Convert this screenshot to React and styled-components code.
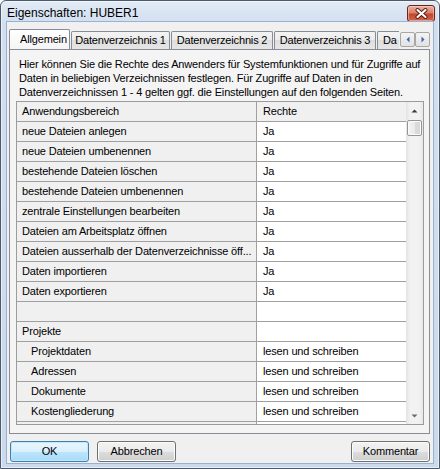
import React from "react";
import styled, { createGlobalStyle } from "styled-components";

const GlobalStyle = createGlobalStyle`
  html, body { margin: 0; padding: 0; background: #ffffff; }
  body {
    font-family: "Liberation Sans", Arial, sans-serif;
    font-size: 11px;
    letter-spacing: -0.16px;
    color: #000;
  }
  * { box-sizing: border-box; }
`;

const Window = styled.div`
  width: 440px;
  height: 469px;
  display: flex;
  flex-direction: column;
  border: 1px solid #4d5a6b;
  border-radius: 6px 6px 0 0;
  background: linear-gradient(to bottom, #e2ebf6 0px, #d2dfef 22px, #cad9ec 100%);
  box-shadow: inset 0 0 0 1px rgba(255, 255, 255, 0.55);
  overflow: hidden;
`;

const TitleBar = styled.div`
  height: 21px;
  flex: none;
  display: flex;
  align-items: flex-start;
  padding: 0 4px 0 6px;
`;

const Title = styled.div`
  flex: 1;
  font-size: 12px;
  line-height: 12px;
  letter-spacing: 0;
  padding-top: 6px;
  white-space: nowrap;
`;

const CloseButton = styled.div`
  margin-top: 4px;
  width: 28px;
  height: 17px;
  border: 1px solid #6b2417;
  border-radius: 3px;
  background: linear-gradient(to bottom, #eab3a3 0%, #d98068 45%, #c4472c 55%, #d4654a 100%);
  box-shadow: inset 0 0 0 1px rgba(255, 220, 210, 0.5);
  display: flex;
  align-items: center;
  justify-content: center;
`;

const Client = styled.div`
  flex: 1;
  margin: 0 6px 5px 6px;
  background: #f0f0f0;
  box-shadow: 0 0 0 1px #9ab2d1;
  padding: 6px 3px 1px 2px;
  display: flex;
  flex-direction: column;
`;

const TabStrip = styled.div`
  height: 21px;
  flex: none;
  display: flex;
  position: relative;
  z-index: 1;
`;

const TabList = styled.div`
  flex: 1;
  display: flex;
  align-items: flex-end;
  overflow: hidden;
`;

const Tab = styled.div`
  flex: none;
  width: ${(p) => p.$w}px;
  height: ${(p) => (p.$active ? 21 : 18)}px;
  margin-bottom: ${(p) => (p.$active ? -1 : 0)}px;
  margin-left: ${(p) => (p.$first ? 0 : 1)}px;
  border: 1px solid #898c95;
  border-bottom: none;
  border-right: ${(p) => (p.$clipped ? "none" : "1px solid #898c95")};
  border-radius: ${(p) => (p.$clipped ? "2px 0 0 0" : "2px 2px 0 0")};
  background: ${(p) =>
    p.$active
      ? "linear-gradient(to bottom, #ffffff, #f4f4f4)"
      : "linear-gradient(to bottom, #f3f3f3 0%, #ebebeb 50%, #dedede 50%, #e6e6e6 100%)"};
  line-height: 17px;
  padding-top: ${(p) => (p.$active ? 1 : 0)}px;
  padding-left: ${(p) => (p.$active ? 10 : p.$clipped ? 5 : 0)}px;
  text-align: ${(p) => (p.$active || p.$clipped ? "left" : "center")};
  white-space: nowrap;
  overflow: hidden;
`;

const Arrows = styled.div`
  flex: none;
  display: flex;
  margin-top: 4px;
  height: 15px;
`;

const ArrowButton = styled.div`
  width: 15px;
  height: 15px;
  border: 1px solid #a7a7a7;
  border-radius: 2px;
  background: linear-gradient(to bottom, #f4f4f4, #e2e2e2);
  display: flex;
  align-items: center;
  justify-content: center;
`;

const Panel = styled.div`
  flex: 1;
  border: 1px solid #898c95;
  background: #f4f4f4;
  padding: 7px 5px 8px 6px;
  display: flex;
  flex-direction: column;
`;

const Description = styled.p`
  margin: 0 0 0 3px;
  line-height: 14px;
  white-space: nowrap;
`;

const Grid = styled.div`
  margin-top: 2px;
  height: 324px;
  flex: none;
  border: 1px solid #9c9c9c;
  display: flex;
  background: #ffffff;
`;

const TableArea = styled.div`
  width: 389px;
  flex: none;
  display: flex;
  flex-direction: column;
  overflow: hidden;
`;

const Row = styled.div`
  flex: none;
  height: 20px;
  display: grid;
  grid-template-columns: 240px 149px;
`;

const LabelCell = styled.div`
  background: #f0f0f0;
  border-right: 1px solid #a0a0a0;
  border-bottom: 1px solid #a0a0a0;
  padding-left: ${(p) => (p.$indent ? 14 : 5)}px;
  line-height: 19px;
  white-space: nowrap;
  overflow: hidden;
`;

const ValueCell = styled.div`
  background: ${(p) => (p.$header ? "#f0f0f0" : "#ffffff")};
  border-bottom: 1px solid #a0a0a0;
  padding-left: 6px;
  line-height: 19px;
  white-space: nowrap;
  overflow: hidden;
`;

const Body = styled.div`
  flex: 1;
  overflow: hidden;
  display: flex;
  flex-direction: column;
`;

const ScrollBar = styled.div`
  width: 17px;
  flex: none;
  display: flex;
  flex-direction: column;
  background: linear-gradient(to right, #e3e3e3 0%, #f2f2f2 25%, #f2f2f2 75%, #e8e8e8 100%);
`;

const ScrollArrow = styled.div`
  height: 17px;
  flex: none;
  display: flex;
  align-items: center;
  justify-content: center;
`;

const Track = styled.div`
  flex: 1;
  padding: 1px 1px 0 1px;
`;

const Thumb = styled.div`
  height: 16px;
  border: 1px solid #969696;
  border-radius: 2px;
  background: linear-gradient(to right, #f5f5f5 0%, #e9e9e9 50%, #dcdcdc 51%, #d6d6d6 100%);
  box-shadow: inset 0 0 0 1px #fbfbfb;
`;

const ButtonRow = styled.div`
  flex: none;
  display: flex;
  gap: 8px;
  padding: 7px 0 0 1px;
`;

const Spacer = styled.div`
  flex: 1;
`;

const Button = styled.div`
  width: ${(p) => p.$w || 79}px;
  height: 21px;
  border: 1px solid ${(p) => (p.$default ? "#3c7fb1" : "#707070")};
  border-radius: 3px;
  background: ${(p) =>
    p.$default
      ? "linear-gradient(to bottom, #eaf6fd 0%, #d9f0fc 50%, #bee6fd 50%, #a7d9f5 100%)"
      : "linear-gradient(to bottom, #f2f2f2 0%, #ebebeb 50%, #dddddd 50%, #cfcfcf 100%)"};
  box-shadow: inset 0 0 0 1px ${(p) => (p.$default ? "#c6e7f9" : "#fcfcfc")};
  text-align: center;
  line-height: 19px;
`;

const tabs = [
  { label: "Allgemein", w: 61, active: true },
  { label: "Datenverzeichnis 1", w: 99 },
  { label: "Datenverzeichnis 2", w: 102 },
  { label: "Datenverzeichnis 3", w: 102 },
  { label: "Da", w: 22, clipped: true },
];

const rows = [
  { label: "neue Dateien anlegen", value: "Ja" },
  { label: "neue Dateien umbenennen", value: "Ja" },
  { label: "bestehende Dateien löschen", value: "Ja" },
  { label: "bestehende Dateien umbenennen", value: "Ja" },
  { label: "zentrale Einstellungen bearbeiten", value: "Ja" },
  { label: "Dateien am Arbeitsplatz öffnen", value: "Ja" },
  { label: "Dateien ausserhalb der Datenverzeichnisse öff...", value: "Ja" },
  { label: "Daten importieren", value: "Ja" },
  { label: "Daten exportieren", value: "Ja" },
  { label: "", value: "" },
  { label: "Projekte", value: "" },
  { label: "Projektdaten", value: "lesen und schreiben", indent: true },
  { label: "Adressen", value: "lesen und schreiben", indent: true },
  { label: "Dokumente", value: "lesen und schreiben", indent: true },
  { label: "Kostengliederung", value: "lesen und schreiben", indent: true },
  { label: "", value: "" },
];

const Tri = ({ dir, color = "#3a3a3a" }) => {
  const pts = {
    up: "0.5,3.5 3.5,0.5 6.5,3.5",
    down: "0.5,0.5 3.5,3.5 6.5,0.5",
  };
  return (
    <svg width="7" height="4" viewBox="0 0 7 4">
      <polygon points={pts[dir]} fill={color} />
    </svg>
  );
};

const SideTri = ({ dir }) => (
  <svg width="4" height="7" viewBox="0 0 4 7">
    <polygon
      points={dir === "left" ? "3.5,0.5 0.5,3.5 3.5,6.5" : "0.5,0.5 3.5,3.5 0.5,6.5"}
      fill="#3f68ad"
    />
  </svg>
);

export default function App() {
  return (
    <>
      <GlobalStyle />
      <Window>
        <TitleBar>
          <Title>Eigenschaften: HUBER1</Title>
          <CloseButton>
            <svg width="13" height="11" viewBox="0 0 13 11">
              <path d="M2.5 2 L10.5 9 M10.5 2 L2.5 9" stroke="#5a160b" strokeWidth="4" strokeLinecap="round" />
              <path d="M2.5 2 L10.5 9 M10.5 2 L2.5 9" stroke="#ffffff" strokeWidth="2.2" strokeLinecap="round" />
            </svg>
          </CloseButton>
        </TitleBar>
        <Client>
          <TabStrip>
            <TabList>
              {tabs.map((t, i) => (
                <Tab
                  key={t.label}
                  $w={t.w}
                  $active={t.active}
                  $clipped={t.clipped}
                  $first={i === 0}
                >
                  {t.label}
                </Tab>
              ))}
            </TabList>
            <Arrows>
              <ArrowButton>
                <SideTri dir="left" />
              </ArrowButton>
              <ArrowButton>
                <SideTri dir="right" />
              </ArrowButton>
            </Arrows>
          </TabStrip>
          <Panel>
            <Description>
              Hier können Sie die Rechte des Anwenders für Systemfunktionen und für Zugriffe auf
              <br />
              Daten in beliebigen Verzeichnissen festlegen. Für Zugriffe auf Daten in den
              <br />
              Datenverzeichnissen 1 - 4 gelten ggf. die Einstellungen auf den folgenden Seiten.
            </Description>
            <Grid>
              <TableArea>
                <Row>
                  <LabelCell>Anwendungsbereich</LabelCell>
                  <ValueCell $header>Rechte</ValueCell>
                </Row>
                <Body>
                  {rows.map((r, i) => (
                    <Row key={i}>
                      <LabelCell $indent={r.indent}>{r.label}</LabelCell>
                      <ValueCell>{r.value}</ValueCell>
                    </Row>
                  ))}
                </Body>
              </TableArea>
              <ScrollBar>
                <ScrollArrow>
                  <Tri dir="up" />
                </ScrollArrow>
                <Track>
                  <Thumb />
                </Track>
                <ScrollArrow>
                  <Tri dir="down" color="#6a6a6a" />
                </ScrollArrow>
              </ScrollBar>
            </Grid>
          </Panel>
          <ButtonRow>
            <Button $default>OK</Button>
            <Button>Abbrechen</Button>
            <Spacer />
            <Button>Kommentar</Button>
          </ButtonRow>
        </Client>
      </Window>
    </>
  );
}
